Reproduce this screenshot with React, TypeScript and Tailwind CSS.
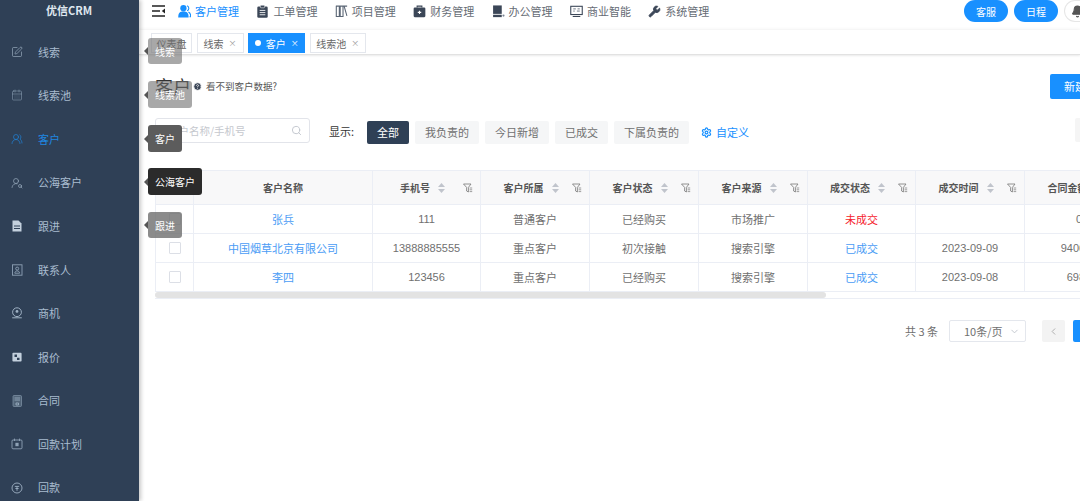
import {
  Bell,
  CalendarDays,
  ChevronDown,
  ChevronLeft,
  CircleHelp,
  Search,
  Settings,
  SquarePen,
  UserRoundSearch,
  UsersRound,
  Wrench,
} from "lucide-react";
import type { ReactNode } from "react";

/* small drawn icons, the icon packages have nothing close for these */
function Glyph({ size = 12, children }: { size?: number; children: ReactNode }) {
  return (
    <svg width={size} height={size} viewBox="0 0 12 12" fill="none" className="shrink-0">
      {children}
    </svg>
  );
}

const sideIcon = "#9fb1c4";
const sideBg = "#2f4056";
const navIcon = "#3b4657";

const menu: { label: string; icon: ReactNode; active?: boolean }[] = [
  { label: "线索", icon: <SquarePen size={12} strokeWidth={1.2} className="text-[#a9bccf]" /> },
  { label: "线索池", icon: <CalendarDays size={12} strokeWidth={1.1} className="text-[#8ea1b5]" /> },
  { label: "客户", icon: <UsersRound size={12} strokeWidth={1.3} />, active: true },
  { label: "公海客户", icon: <UserRoundSearch size={12} strokeWidth={1.3} className="text-[#9fb1c4]" /> },
  {
    label: "跟进",
    icon: (
      <Glyph>
        <path d="M1.5 0.5h6l3 3v8h-9z" fill="#c3d0dd" />
        <path d="M3 6h6M3 8.5h6" stroke={sideBg} strokeWidth="1" />
      </Glyph>
    ),
  },
  {
    label: "联系人",
    icon: (
      <Glyph>
        <rect x="1.5" y="0.8" width="9.5" height="10.4" stroke="#8ea1b5" strokeWidth="0.9" />
        <circle cx="6.2" cy="4.6" r="1.5" stroke="#8ea1b5" strokeWidth="0.9" />
        <path d="M3.8 9.2c0-3 4.8-3 4.8 0z" stroke="#8ea1b5" strokeWidth="0.9" />
      </Glyph>
    ),
  },
  {
    label: "商机",
    icon: (
      <Glyph>
        <circle cx="6" cy="5.2" r="4.4" stroke="#9fb1c4" strokeWidth="1" />
        <circle cx="6" cy="4.4" r="1.4" fill="#9fb1c4" />
        <path d="M1.2 10.8h9.6" stroke="#9fb1c4" strokeWidth="1" />
      </Glyph>
    ),
  },
  {
    label: "报价",
    icon: (
      <Glyph size={10}>
        <rect x="0.5" y="1" width="11" height="10.5" rx="1" fill="#c3d0dd" />
        <path d="M3 3h3v3H3zM6 7h3v2.5H6z" fill={sideBg} />
      </Glyph>
    ),
  },
  {
    label: "合同",
    icon: (
      <Glyph>
        <rect x="2" y="0.5" width="8.5" height="11" rx="1" fill="#516478" stroke="#8ea1b5" strokeWidth="0.6" />
        <path d="M3.5 3h5.5M3.5 5h5.5M5 8h2.5v2H5z" stroke="#a9bccf" strokeWidth="0.7" />
      </Glyph>
    ),
  },
  {
    label: "回款计划",
    icon: (
      <Glyph>
        <rect x="1" y="2" width="10" height="8.8" rx="1" stroke="#8ea1b5" strokeWidth="0.9" />
        <path d="M3.5 0.6v2.4M8.5 0.6v2.4" stroke="#8ea1b5" strokeWidth="0.9" />
        <rect x="4.4" y="4.8" width="3.2" height="3.4" fill="#8ea1b5" />
      </Glyph>
    ),
  },
  {
    label: "回款",
    icon: (
      <Glyph>
        <circle cx="6" cy="6" r="5" stroke={sideIcon} strokeWidth="0.9" />
        <path d="M3.8 4.4h4.4M6 4.4v4.4M4.4 6.5h3.2" stroke={sideIcon} strokeWidth="0.9" />
      </Glyph>
    ),
  },
];

const tips = [
  { label: "线索", box: "top-[38px] h-[26px] bg-[#6e6e6e]/60" },
  { label: "线索池", box: "top-[81px] h-[27px] bg-[#6e6e6e]/60" },
  { label: "客户", box: "top-[125px] h-[27px] bg-[#5c5c5c]" },
  { label: "公海客户", box: "top-[168px] h-[27px] bg-[#2b2b2b]" },
  { label: "跟进", box: "top-[212px] h-[26px] bg-[#6e6e6e]/80" },
];

const nav: { label: string; icon: ReactNode; active?: boolean }[] = [
  {
    label: "客户管理",
    active: true,
    icon: (
      <Glyph size={13}>
        <circle cx="5" cy="3" r="2.9" fill="#1890ff" />
        <path d="M0.2 11.6c0-4.6 1.6-5.6 4.8-5.6s4.8 1 4.8 5.6z" fill="#1890ff" />
        <path d="M8.4 0.6a2.6 2.6 0 0 1 0 4.8M9.6 6.4c1.5 0.6 2.2 2 2.2 4.4h-1.2" stroke="#1890ff" strokeWidth="1" />
      </Glyph>
    ),
  },
  {
    label: "工单管理",
    icon: (
      <Glyph size={13}>
        <rect x="1.2" y="1.4" width="9.6" height="10.4" rx="1.2" fill={navIcon} />
        <rect x="4" y="0.2" width="4" height="2.4" rx="0.6" fill={navIcon} stroke="white" strokeWidth="0.5" />
        <path d="M3.4 5h5.2M3.4 7h5.2M3.4 9h5.2" stroke="white" strokeWidth="0.8" />
      </Glyph>
    ),
  },
  {
    label: "项目管理",
    icon: (
      <Glyph size={13}>
        <path d="M0.8 1h10.4M1.2 1v9.6h2.8V1M4.8 1v9.6h2.6V1M8.4 1l2.6 9" stroke="#5b6675" strokeWidth="1" />
      </Glyph>
    ),
  },
  {
    label: "财务管理",
    icon: (
      <Glyph size={13}>
        <path d="M3.8 2.4V1h4.4v1.4" stroke={navIcon} strokeWidth="1" />
        <rect x="0.6" y="2.4" width="10.8" height="8.8" rx="1" fill={navIcon} />
        <path d="M6 5.2v3.2M4.4 6.8h3.2" stroke="white" strokeWidth="1" />
      </Glyph>
    ),
  },
  {
    label: "办公管理",
    icon: (
      <Glyph size={13}>
        <path d="M1 0.4h8v7.8H1z" fill={navIcon} />
        <path d="M1 9h8v2.2H1z" fill={navIcon} />
        <circle cx="10.6" cy="9.8" r="1" fill="#7a8594" />
      </Glyph>
    ),
  },
  {
    label: "商业智能",
    icon: (
      <Glyph size={13}>
        <rect x="0.7" y="1.2" width="10.6" height="7.6" stroke={navIcon} strokeWidth="1" />
        <path d="M3 3.6h2.4M3 5.6h1.4M6.4 5.6h2.6M7 3.6h2" stroke="#5b6675" strokeWidth="0.8" />
        <path d="M2.5 10.6h7" stroke={navIcon} strokeWidth="1" />
      </Glyph>
    ),
  },
  {
    label: "系统管理",
    icon: <Wrench size={13} strokeWidth={1.6} className="fill-[#3b4657] text-[#3b4657]" />,
  },
];

const tabs = [
  { label: "仪表盘", width: "w-[41px]" },
  { label: "线索", width: "w-[47px]", close: true },
  { label: "客户", width: "w-[57px]", close: true, active: true },
  { label: "线索池", width: "w-[56px]", close: true },
];

const scopes = [
  { label: "全部", width: "w-[42px]", active: true },
  { label: "我负责的", width: "w-[64px]" },
  { label: "今日新增", width: "w-[64px]" },
  { label: "已成交", width: "w-[53px]" },
  { label: "下属负责的", width: "w-[75px]" },
];

const columns = [
  { label: "手机号", width: "w-[108px]" },
  { label: "客户所属", width: "w-[109px]" },
  { label: "客户状态", width: "w-[109px]" },
  { label: "客户来源", width: "w-[109px]" },
  { label: "成交状态", width: "w-[108px]" },
  { label: "成交时间", width: "w-[109px]" },
  { label: "合同金额", width: "w-[109px]" },
];

const rows = [
  { name: "张兵", phone: "111", group: "普通客户", status: "已经购买", source: "市场推广", deal: "未成交", date: "", amount: "0" },
  { name: "中国烟草北京有限公司", phone: "13888885555", group: "重点客户", status: "初次接触", source: "搜索引擎", deal: "已成交", date: "2023-09-09", amount: "940600" },
  { name: "李四", phone: "123456", group: "重点客户", status: "已经购买", source: "搜索引擎", deal: "已成交", date: "2023-09-08", amount: "6980" },
];

function Sidebar() {
  return (
    <aside className="z-10 flex h-full w-[139px] shrink-0 flex-col overflow-hidden bg-[#2f4056] shadow-[2px_0_4px_rgba(0,0,0,0.22)]">
      <div className="h-[30px] shrink-0 pr-[1px] text-center text-[11px] leading-[20px] font-bold text-[#dfe7ef]">优信CRM</div>
      {menu.map((item) => (
        <div
          key={item.label}
          className={`flex h-[43.6px] shrink-0 items-center text-[11px] ${
            item.active ? "text-[#1f86e0]" : "text-[#a9bccf]"
          }`}
        >
          <span className="flex w-[38px] shrink-0 justify-center pr-[4px]">{item.icon}</span>
          <span>{item.label}</span>
        </div>
      ))}
    </aside>
  );
}

function Tooltips() {
  return (
    <>
      {tips.map((tip) => (
        <div
          key={tip.label}
          className={`absolute left-[148px] z-20 flex items-center rounded-[3px] px-[7px] text-[10px] whitespace-nowrap text-white ${tip.box}`}
        >
          <span className="absolute top-1/2 left-[-4px] h-0 w-0 -translate-y-1/2 border-y-[4px] border-r-[4px] border-y-transparent border-r-[#555]" />
          {tip.label}
        </div>
      ))}
    </>
  );
}

function TopBar() {
  return (
    <header className="flex h-[30px] shrink-0 items-start pt-[3px] pl-[13px]">
      {/* collapse toggle */}
      <svg width="13" height="12" viewBox="0 0 13 12" className="mt-[2px] mr-[13px] shrink-0 text-[#222]">
        <path d="M0 1h13M0 6h8M0 11h13" stroke="currentColor" strokeWidth="1.4" />
        <path d="M13 3.5v5L9.8 6z" fill="currentColor" />
      </svg>
      <nav className="flex items-center gap-[17.4px]">
        {nav.map((item) => (
          <div
            key={item.label}
            className={`flex items-center gap-[4px] text-[11px] leading-[16px] ${
              item.active ? "text-[#1890ff]" : "text-[#666c75]"
            }`}
          >
            {item.icon}
            <span>{item.label}</span>
          </div>
        ))}
      </nav>
      <div className="mt-[-3px] ml-auto flex items-center gap-[6px]">
        <button className="h-[22px] w-[44px] rounded-full bg-[#1890ff] text-[10px] text-white">客服</button>
        <button className="h-[22px] w-[44px] rounded-full bg-[#1890ff] text-[10px] text-white">日程</button>
        <span className="flex h-[22px] w-[16px] items-center justify-end overflow-hidden rounded-l-full border-y border-l border-[#e6e6e6] bg-white">
          <Bell size={13} className="mr-[-4px] shrink-0 fill-[#555] text-[#555]" />
        </span>
      </div>
    </header>
  );
}

function TabStrip() {
  return (
    <div className="flex h-[25px] shrink-0 items-start gap-[4.6px] border-b border-[#e2e2e2] pt-[3px] pl-[12px] shadow-[0_-1px_3px_rgba(0,0,0,0.05),0_1px_2px_rgba(0,0,0,0.08)]">
      {tabs.map((tab) => (
        <div
          key={tab.label}
          className={`flex h-[20px] items-center justify-center gap-[5px] border text-[10px] ${tab.width} ${
            tab.active ? "border-[#1890ff] bg-[#1890ff] text-white" : "border-[#e4e7ed] bg-white text-[#666]"
          }`}
        >
          {tab.active && <span className="h-[6px] w-[6px] rounded-full bg-white" />}
          <span>{tab.label}</span>
          {tab.close && <span className={`text-[8px] ${tab.active ? "text-white" : "text-[#999]"}`}>×</span>}
        </div>
      ))}
    </div>
  );
}

function SortCaret() {
  return (
    <svg width="7" height="10" viewBox="0 0 7 10" className="shrink-0 text-[#c0c4cc]">
      <path d="M3.5 0 7 4H0zM3.5 10 0 6h7z" fill="currentColor" />
    </svg>
  );
}

function FilterMark() {
  return (
    <svg width="10" height="10" viewBox="0 0 10 10" fill="none" className="absolute top-[12px] right-[7px] text-[#777]">
      <path d="M0.5 1h7.5L5.4 4.4V9L3.6 8V4.4z" stroke="currentColor" strokeWidth="0.8" />
      <path d="M6.6 5h2.6M6.6 6.8h2.6M6.6 8.6h2.6" stroke="currentColor" strokeWidth="0.7" />
    </svg>
  );
}

function Checkbox() {
  return <span className="mx-auto block h-[12px] w-[12px] rounded-[1px] border border-[#dcdfe6] bg-white" />;
}

function CustomerTable() {
  const cell = "border-r border-b border-[#ebeef5] text-center text-[11px] font-normal";
  const latin = "font-['Liberation_Sans','Noto_Sans_CJK_SC',sans-serif]";
  return (
    <div className="w-[978px]">
      <table className="w-[978px] table-fixed border-collapse border-t border-l border-[#ebeef5]">
        <thead>
          <tr className="h-[34px] bg-[#f8f8f9]">
            <th className="w-[38px] border-r border-b border-[#ebeef5]">
              <Checkbox />
            </th>
            <th className="w-[179px] border-r border-b border-[#ebeef5] text-[10px] font-semibold text-[#555]">客户名称</th>
            {columns.map((col) => (
              <th key={col.label} className={`relative border-r border-b border-[#ebeef5] ${col.width}`}>
                <div className="flex items-center justify-center gap-[8px] pr-[8px] text-[10px] font-semibold text-[#555]">
                  <span>{col.label}</span>
                  <SortCaret />
                </div>
                <FilterMark />
              </th>
            ))}
          </tr>
        </thead>
        <tbody>
          {rows.map((row) => (
            <tr key={row.name} className="h-[29px] text-[#707070]">
              <td className={cell}>
                <Checkbox />
              </td>
              <td className={`${cell} text-[#4a9cf5]`}>{row.name}</td>
              <td className={`${cell} ${latin}`}>{row.phone}</td>
              <td className={cell}>{row.group}</td>
              <td className={cell}>{row.status}</td>
              <td className={cell}>{row.source}</td>
              <td className={`${cell} ${row.deal === "未成交" ? "text-[#f5222d]" : "text-[#4a9cf5]"}`}>{row.deal}</td>
              <td className={`${cell} ${latin}`}>{row.date}</td>
              <td className={`${cell} ${latin}`}>{row.amount}</td>
            </tr>
          ))}
        </tbody>
      </table>
      {/* horizontal scrollbar */}
      <div className="h-[7px] w-full border-b border-[#ebeef5]">
        <div className="h-[6px] w-[671px] rounded-[3px] bg-[#e3e3e3]" />
      </div>
    </div>
  );
}

function Content() {
  return (
    <div className="w-[961px] pt-[19px] pl-[16px]">
      <div className="flex h-[25px] items-center justify-between">
        <div className="flex items-center">
          <h1 className="mr-[2px] text-[18px] leading-[25px] font-normal text-[#333]">客户</h1>
          <CircleHelp size={9} className="mr-[4px] fill-[#3b4657] text-white" />
          <span className="text-[9.5px] text-[#555]">看不到客户数据?</span>
        </div>
        <button className="h-[25px] w-[50px] rounded-[2px] bg-[#1890ff] text-[11px] text-white">新建</button>
      </div>

      <div className="mt-[19px] flex h-[26px] items-start justify-between">
        <div className="flex items-start">
          <div className="flex h-[25px] w-[155px] items-center justify-between rounded-[3px] border border-[#e2e4ea] bg-white pr-[7px] pl-[12px]">
            <span className="text-[10.5px] text-[#c5c8ce]">客户名称/手机号</span>
            <Search size={11} className="text-[#c0c4cc]" />
          </div>
          <span className="mt-[5px] ml-[19px] w-[38px] text-[11px] text-[#333]">显示:</span>
          <div className="mt-[3px] flex items-center gap-[6px]">
            {scopes.map((scope) => (
              <span
                key={scope.label}
                className={`flex h-[23px] items-center justify-center rounded-[2px] text-[11px] ${scope.width} ${
                  scope.active ? "bg-[#2f4056] text-white" : "bg-[#f5f6f7] text-[#707070]"
                }`}
              >
                {scope.label}
              </span>
            ))}
          </div>
          <div className="mt-[3px] ml-[12px] flex h-[23px] items-center gap-[4px] text-[11px] text-[#1890ff]">
            <Settings size={11} strokeWidth={2.6} />
            <span>自定义</span>
          </div>
        </div>
        <span className="h-[24px] w-[25px] rounded-[2px] bg-[#f5f5f5]" />
      </div>

      <div className="mt-[26px]">
        <CustomerTable />
      </div>

      <div className="mt-[21px] flex h-[22px] items-center justify-end text-[11px] text-[#707070]">
        <span>共 3 条</span>
        <div className="ml-[11px] flex h-[22px] w-[77px] items-center justify-between rounded-[2px] border border-[#e4e7ed] pr-[5px] pl-[14px]">
          <span>10条/页</span>
          <ChevronDown size={11} className="text-[#c0c4cc]" />
        </div>
        <span className="ml-[16px] flex h-[22px] w-[23px] items-center justify-center rounded-[2px] bg-[#f3f3f3]">
          <ChevronLeft size={11} className="text-[#aaa]" />
        </span>
        <span className="ml-[8px] h-[22px] w-[27px] rounded-[2px] bg-[#1890ff]" />
      </div>
    </div>
  );
}

export default function App() {
  return (
    <div className="relative flex h-[501px] w-[1080px] overflow-hidden bg-white font-['Noto_Sans_CJK_SC','Liberation_Sans',sans-serif]">
      <Sidebar />
      <main className="flex min-w-0 flex-1 flex-col">
        <TopBar />
        <TabStrip />
        <Content />
      </main>
      <Tooltips />
    </div>
  );
}
